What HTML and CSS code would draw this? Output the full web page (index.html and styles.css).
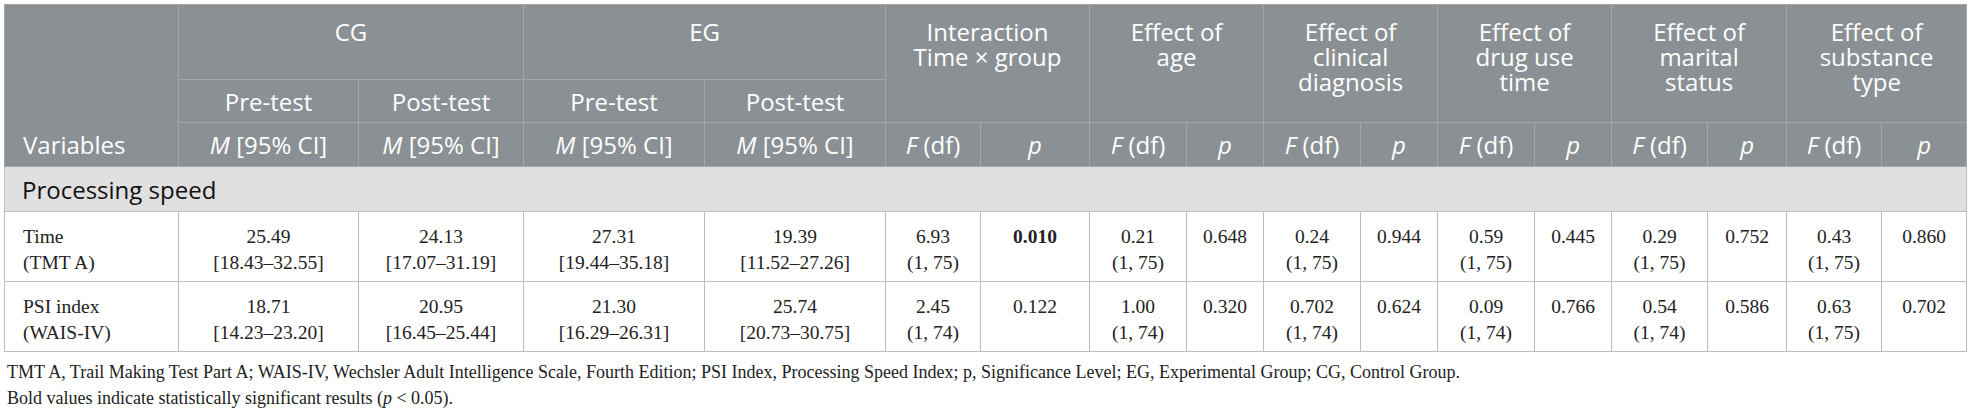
FILE: index.html
```html
<!DOCTYPE html>
<html lang="en">
<head>
<meta charset="utf-8">
<title>Processing speed table</title>
<link rel="stylesheet" href="styles.css">
</head>
<body>
<div class="page">
  <table class="tbl">
    <colgroup>
      <col class="c-var">
      <col class="c-m1"><col class="c-m2"><col class="c-m3"><col class="c-m4">
      <col class="c-f1"><col class="c-p1">
      <col class="c-f2"><col class="c-p2">
      <col class="c-f3"><col class="c-p3">
      <col class="c-f4"><col class="c-p4">
      <col class="c-f5"><col class="c-p5">
      <col class="c-f6"><col class="c-p6">
    </colgroup>
    <thead>
      <tr class="h1">
        <th rowspan="3" class="var-head">Variables</th>
        <th colspan="2">CG</th>
        <th colspan="2">EG</th>
        <th colspan="2" rowspan="2">Interaction<br>Time × group</th>
        <th colspan="2" rowspan="2">Effect of<br>age</th>
        <th colspan="2" rowspan="2">Effect of<br>clinical<br>diagnosis</th>
        <th colspan="2" rowspan="2">Effect of<br>drug use<br>time</th>
        <th colspan="2" rowspan="2">Effect of<br>marital<br>status</th>
        <th colspan="2" rowspan="2">Effect of<br>substance<br>type</th>
      </tr>
      <tr class="h2">
        <th>Pre-test</th>
        <th>Post-test</th>
        <th>Pre-test</th>
        <th>Post-test</th>
      </tr>
      <tr class="h3">
        <th><i>M</i> [95% CI]</th>
        <th><i>M</i> [95% CI]</th>
        <th><i>M</i> [95% CI]</th>
        <th><i>M</i> [95% CI]</th>
        <th><i>F</i> (df)</th><th><i>p</i></th>
        <th><i>F</i> (df)</th><th><i>p</i></th>
        <th><i>F</i> (df)</th><th><i>p</i></th>
        <th><i>F</i> (df)</th><th><i>p</i></th>
        <th><i>F</i> (df)</th><th><i>p</i></th>
        <th><i>F</i> (df)</th><th><i>p</i></th>
      </tr>
    </thead>
    <tbody>
      <tr class="section">
        <td colspan="17">Processing speed</td>
      </tr>
      <tr class="data">
        <td class="label">Time<br>(TMT A)</td>
        <td>25.49<br>[18.43–32.55]</td>
        <td>24.13<br>[17.07–31.19]</td>
        <td>27.31<br>[19.44–35.18]</td>
        <td>19.39<br>[11.52–27.26]</td>
        <td>6.93<br>(1, 75)</td>
        <td><b>0.010</b></td>
        <td>0.21<br>(1, 75)</td>
        <td>0.648</td>
        <td>0.24<br>(1, 75)</td>
        <td>0.944</td>
        <td>0.59<br>(1, 75)</td>
        <td>0.445</td>
        <td>0.29<br>(1, 75)</td>
        <td>0.752</td>
        <td>0.43<br>(1, 75)</td>
        <td>0.860</td>
      </tr>
      <tr class="data">
        <td class="label">PSI index<br>(WAIS-IV)</td>
        <td>18.71<br>[14.23–23.20]</td>
        <td>20.95<br>[16.45–25.44]</td>
        <td>21.30<br>[16.29–26.31]</td>
        <td>25.74<br>[20.73–30.75]</td>
        <td>2.45<br>(1, 74)</td>
        <td>0.122</td>
        <td>1.00<br>(1, 74)</td>
        <td>0.320</td>
        <td>0.702<br>(1, 74)</td>
        <td>0.624</td>
        <td>0.09<br>(1, 74)</td>
        <td>0.766</td>
        <td>0.54<br>(1, 74)</td>
        <td>0.586</td>
        <td>0.63<br>(1, 75)</td>
        <td>0.702</td>
      </tr>
    </tbody>
  </table>
  <div class="notes">
    <p>TMT A, Trail Making Test Part A; WAIS-IV, Wechsler Adult Intelligence Scale, Fourth Edition; PSI Index, Processing Speed Index; p, Significance Level; EG, Experimental Group; CG, Control Group.</p>
    <p>Bold values indicate statistically significant results (<i>p</i> &lt; 0.05).</p>
  </div>
</div>
</body>
</html>
```

FILE: styles.css
```css
html, body {
  margin: 0;
  padding: 0;
  background: #ffffff;
}

.page {
  padding: 4px 0 0 4px;
}

.tbl {
  border-collapse: collapse;
  table-layout: fixed;
  width: 1962px;
  border: 1px solid #c4c7c8;
}

.c-var { width: 174px; }
.c-m1 { width: 180px; }
.c-m2 { width: 165px; }
.c-m3 { width: 181px; }
.c-m4 { width: 181px; }
.c-f1 { width: 95px; }
.c-p1 { width: 109px; }
.c-f2 { width: 97px; }
.c-p2 { width: 77px; }
.c-f3 { width: 97px; }
.c-p3 { width: 77px; }
.c-f4 { width: 97px; }
.c-p4 { width: 77px; }
.c-f5 { width: 96px; }
.c-p5 { width: 79px; }
.c-f6 { width: 95px; }
.c-p6 { width: 85px; }

.tbl th {
  background: #8b9094;
  color: #ffffff;
  font-family: "Open Sans", "DejaVu Sans", sans-serif;
  font-weight: 400;
  font-size: 24px;
  line-height: 25px;
  text-align: center;
  border: 1px solid #a3a7aa;
  padding: 0 4px;
  white-space: nowrap;
}

.tbl th i {
  font-style: italic;
}

.h1 { height: 75px; }
.h2 { height: 43px; }
.h3 { height: 44px; }

.h1 th {
  vertical-align: top;
  padding-top: 14px;
}

.h2 th,
.h3 th {
  vertical-align: middle;
}

.tbl th.var-head {
  text-align: left;
  vertical-align: bottom;
  padding: 0 0 9px 18px;
}

.section td {
  background: #dfe0df;
  font-family: "Open Sans", "DejaVu Sans", sans-serif;
  font-size: 24px;
  line-height: 25px;
  color: #111111;
  padding: 0 0 0 17px;
  height: 44px;
  vertical-align: middle;
  border: 1px solid #bdbfbf;
}

.data { height: 70px; }

.data td {
  font-family: "Liberation Serif", "Times New Roman", serif;
  font-size: 19.5px;
  line-height: 25.5px;
  color: #222222;
  text-align: center;
  vertical-align: top;
  padding: 12px 2px 0 2px;
  border: 1px solid #bcbcbc;
  white-space: nowrap;
}

.data td.label {
  text-align: left;
  padding-left: 18px;
}

.notes {
  padding: 7px 0 0 3px;
  font-family: "Liberation Serif", "Times New Roman", serif;
  font-size: 18px;
  line-height: 26px;
  color: #222222;
}

.notes p {
  margin: 0;
}
```
